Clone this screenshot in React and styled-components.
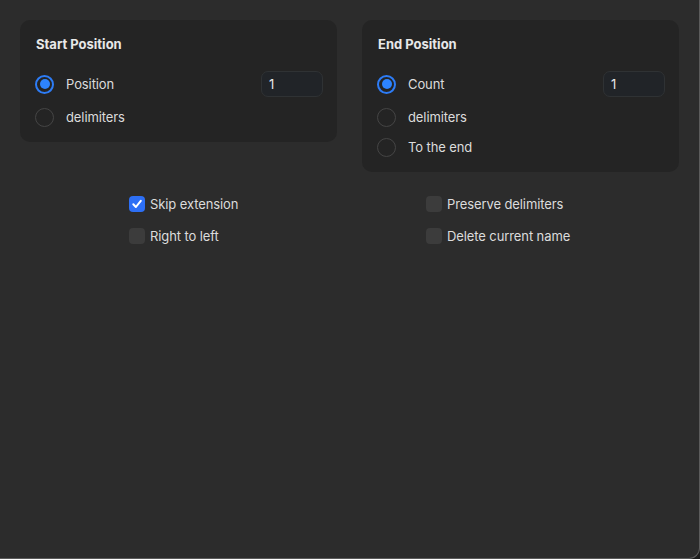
import React from "react";
import styled, { createGlobalStyle } from "styled-components";

const Global = createGlobalStyle`
  html, body { margin: 0; padding: 0; background: #1b1b1b; }
  body { font-family: Inter, "Noto Sans", "Liberation Sans", sans-serif; }
  * { box-sizing: border-box; }
`;

const Window = styled.div`
  width: 700px;
  height: 559px;
  background: #2c2c2c;
  border-right: 1px solid #5c5c5c;
  border-bottom: 1px solid #5c5c5c;
  border-bottom-right-radius: 11px;
  padding: 20px 20px 0 20px;
  display: flex;
  flex-direction: column;
  color: #dedede;
  font-size: 13px;
`;

const Panels = styled.div`
  display: grid;
  grid-template-columns: 317px 317px;
  column-gap: 25px;
  align-items: start;
`;

const Panel = styled.section`
  background: #242424;
  border-radius: 10px;
  padding: 14px 15px 10px 15px;
  display: flex;
  flex-direction: column;
`;

const Title = styled.div`
  font-weight: 700;
  font-size: 13px;
  line-height: 20px;
  color: #e8e8e8;
  padding-left: 1px;
  margin-bottom: 12px;
`;

const Row = styled.div`
  display: flex;
  align-items: center;
  height: ${(p) => (p.$tall ? 36 : 30)}px;
`;

const RadioCircle = styled.span`
  width: 19px;
  height: 19px;
  border-radius: 50%;
  flex: none;
  border: ${(p) => (p.$on ? "2px solid #2d7cf6" : "1.5px solid #454545")};
  display: flex;
  align-items: center;
  justify-content: center;
  &::after {
    content: "";
    display: ${(p) => (p.$on ? "block" : "none")};
    width: 10px;
    height: 10px;
    border-radius: 50%;
    background: #2d84ff;
  }
`;

const Label = styled.span`
  margin-left: ${(p) => p.$gap ?? 12}px;
  color: #dcdcdc;
  flex: 1;
  line-height: 16px;
  letter-spacing: -0.1px;
`;

const NumInput = styled.div`
  width: 62px;
  height: 26px;
  border-radius: 7px;
  background: #212428;
  border: 1px solid #2f3234;
  color: #e8e8e8;
  padding-left: 7px;
  display: flex;
  align-items: center;
  margin-right: -1px;
`;

const Options = styled.div`
  display: grid;
  grid-template-columns: 297px auto;
  row-gap: 16px;
  margin-top: 24px;
  padding-left: 109px;
`;

const Check = styled.div`
  display: flex;
  align-items: center;
  height: 16px;
`;

const Box = styled.span`
  width: 16px;
  height: 16px;
  border-radius: 4px;
  flex: none;
  background: ${(p) => (p.$on ? "#2d6ff5" : "#3c3c3c")};
  display: flex;
  align-items: center;
  justify-content: center;
`;

const Radio = ({ on, label, tall, value }) => (
  <Row $tall={tall}>
    <RadioCircle $on={on} />
    <Label>{label}</Label>
    {value !== undefined && <NumInput>{value}</NumInput>}
  </Row>
);

const CheckItem = ({ on, label }) => (
  <Check>
    <Box $on={on}>
      {on && (
        <svg width="12" height="12" viewBox="0 0 12 12">
          <path d="M2.3 6.3 L4.9 9 L9.8 2.8" fill="none" stroke="#fff" strokeWidth="2" strokeLinecap="round" strokeLinejoin="round" />
        </svg>
      )}
    </Box>
    <Label $gap={5}>{label}</Label>
  </Check>
);

export default function App() {
  return (
    <>
      <Global />
      <Window>
        <Panels>
          <Panel>
            <Title>Start Position</Title>
            <Radio on tall label="Position" value="1" />
            <Radio label="delimiters" />
          </Panel>
          <Panel>
            <Title>End Position</Title>
            <Radio on tall label="Count" value="1" />
            <Radio label="delimiters" />
            <Radio label="To the end" />
          </Panel>
        </Panels>
        <Options>
          <CheckItem on label="Skip extension" />
          <CheckItem label="Preserve delimiters" />
          <CheckItem label="Right to left" />
          <CheckItem label="Delete current name" />
        </Options>
      </Window>
    </>
  );
}
